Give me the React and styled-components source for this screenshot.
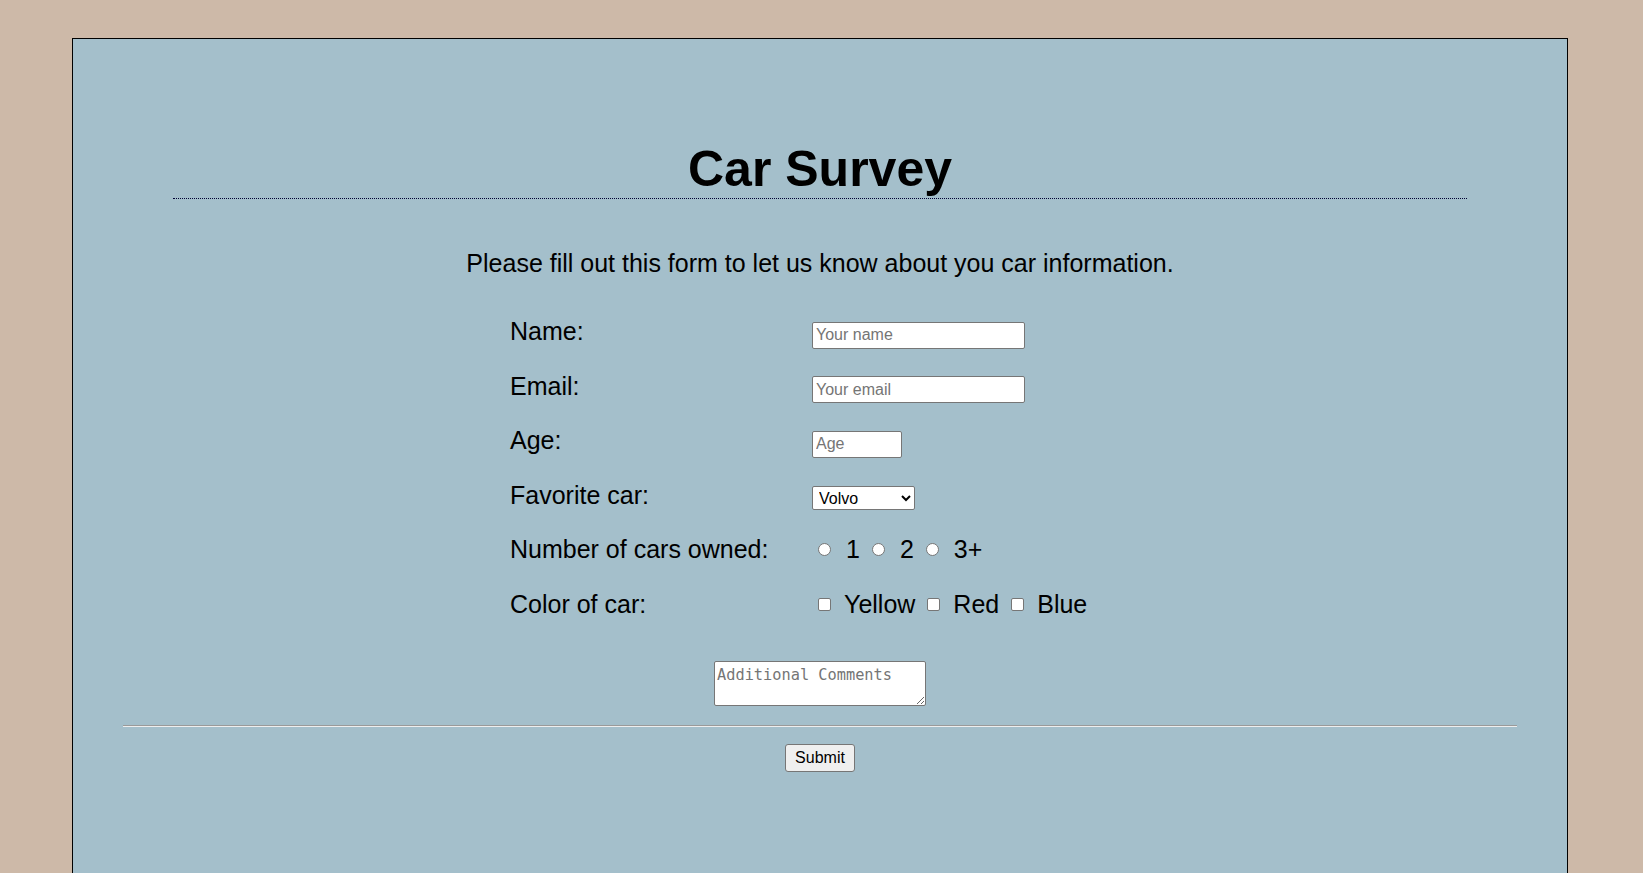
import React from 'react'
import styled, { createGlobalStyle } from 'styled-components'

const GlobalStyle = createGlobalStyle`
    html {
        overflow: hidden;
    }
    body {
        margin: 0;
        background: #cdb9a8;
        font-family: "Liberation Sans", Arial, sans-serif;
        color: #000;
    }
`

const App = () => {
    return (
        <>
            <GlobalStyle />
            <StyledPage>
                <Title>Car Survey</Title>
                <Intro>Please fill out this form to let us know about you car information.</Intro>
                <form onSubmit={(e) => e.preventDefault()}>
                    <FieldGrid>
                        <FieldLabel htmlFor="name">Name:</FieldLabel>
                        <TextInput id="name" type="text" placeholder="Your name" $width={213} />

                        <FieldLabel htmlFor="email">Email:</FieldLabel>
                        <TextInput id="email" type="email" placeholder="Your email" $width={213} />

                        <FieldLabel htmlFor="age">Age:</FieldLabel>
                        <TextInput id="age" type="number" placeholder="Age" $width={90} />

                        <FieldLabel htmlFor="car">Favorite car:</FieldLabel>
                        <div>
                            <CarSelect id="car" defaultValue="volvo">
                                <option value="volvo">Volvo</option>
                                <option value="saab">Saab</option>
                                <option value="mercedes">Mercedes</option>
                                <option value="audi">Audi</option>
                            </CarSelect>
                        </div>

                        <FieldLabel as="span">Number of cars owned:</FieldLabel>
                        <ChoiceGroup>
                            {['1', '2', '3+'].map((n) => (
                                <Choice key={n}>
                                    <ChoiceBox type="radio" name="owned" value={n} $round />
                                    {n}
                                </Choice>
                            ))}
                        </ChoiceGroup>

                        <FieldLabel as="span">Color of car:</FieldLabel>
                        <ChoiceGroup>
                            {['Yellow', 'Red', 'Blue'].map((c) => (
                                <Choice key={c}>
                                    <ChoiceBox type="checkbox" name="color" value={c} />
                                    {c}
                                </Choice>
                            ))}
                        </ChoiceGroup>
                    </FieldGrid>

                    <Comments placeholder="Additional Comments" />
                    <Divider />
                    <SubmitRow>
                        <SubmitButton type="submit">Submit</SubmitButton>
                    </SubmitRow>
                </form>
            </StyledPage>
        </>
    )
}

const StyledPage = styled.main`
    margin: 38px 0 0 72px;
    width: 1494px;
    min-height: 900px;
    background: #a4bfcb;
    border: 1px solid #000;
    overflow: hidden;
`

const Title = styled.h1`
    margin: 102px 100px 0;
    font-size: 50px;
    line-height: 57px;
    font-weight: bold;
    text-align: center;
    border-bottom: 1px dotted #000033;
`

const Intro = styled.p`
    margin: 50px 0 0;
    font-size: 25px;
    line-height: 29px;
    text-align: center;
`

const FieldGrid = styled.div`
    width: 620px;
    margin: 39px auto 0;
    display: grid;
    grid-template-columns: 302px 1fr;
    grid-auto-rows: 29px;
    row-gap: 25.5px;
    align-items: baseline;
`

const FieldLabel = styled.label`
    font-size: 25px;
    line-height: 29px;
`

const TextInput = styled.input`
    justify-self: start;
    box-sizing: border-box;
    width: ${(p) => p.$width}px;
    height: 27px;
    padding: 1px 3px;
    font-family: "Liberation Sans", Arial, sans-serif;
    font-size: 16px;
    background: #fff;
    border: 1px solid #767676;
    border-radius: 2px;
    -moz-appearance: textfield;

    &::placeholder {
        color: #757575;
    }
    &::-webkit-outer-spin-button,
    &::-webkit-inner-spin-button {
        -webkit-appearance: none;
        margin: 0;
    }
`

const CarSelect = styled.select`
    box-sizing: border-box;
    width: 103px;
    height: 24px;
    padding-left: 2px;
    font-family: "Liberation Sans", Arial, sans-serif;
    font-size: 16px;
    color: #000;
    background: #fff;
    border: 1px solid #767676;
    border-radius: 2px;
`

const ChoiceGroup = styled.div`
    font-size: 25px;
    line-height: 29px;
    white-space: nowrap;
`

const Choice = styled.label`
    margin-right: 6px;
`

const ChoiceBox = styled.input`
    appearance: none;
    -webkit-appearance: none;
    box-sizing: border-box;
    display: inline-block;
    width: 13px;
    height: 13px;
    margin: 0 ${(p) => (p.$round ? 15 : 13)}px 2px 6px;
    vertical-align: baseline;
    background: #fff;
    border: 1px solid #767676;
    border-radius: ${(p) => (p.$round ? '50%' : '2px')};

    &:checked {
        background: #0075ff;
        border-color: #0075ff;
        box-shadow: inset 0 0 0 ${(p) => (p.$round ? '2px #fff' : '0 transparent')};
    }
`

const Comments = styled.textarea`
    display: block;
    box-sizing: border-box;
    width: 212px;
    height: 45px;
    margin: 42px auto 0;
    padding: 4px 2px 2px;
    font-family: "DejaVu Sans Mono", "Liberation Mono", monospace;
    font-size: 15.3px;
    background: #fff;
    border: 1px solid #767676;
    border-radius: 2px;

    &::placeholder {
        color: #757575;
    }
`

const Divider = styled.hr`
    margin: 19px 50px 0;
    border: 0;
    border-top: 1px solid #9a9a9a;
    border-bottom: 1px solid #eeeeee;
`

const SubmitRow = styled.div`
    display: flex;
    justify-content: center;
    margin-top: 17px;
`

const SubmitButton = styled.button`
    box-sizing: border-box;
    width: 70px;
    height: 28px;
    font-family: "Liberation Sans", Arial, sans-serif;
    font-size: 16px;
    color: #000;
    background: #efefef;
    border: 1px solid #767676;
    border-radius: 3px;
`

export default App
